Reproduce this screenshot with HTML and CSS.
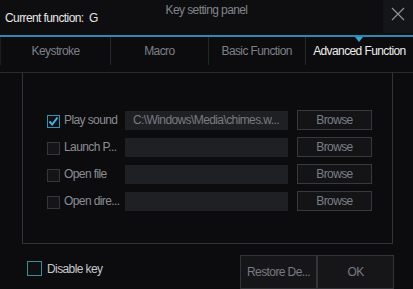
FILE: index.html
```html
<!DOCTYPE html>
<html lang="en">
<head>
    <meta charset="UTF-8">
    <meta name="viewport" content="width=device-width, initial-scale=1.0">
    <title>Key setting panel</title>
    <link rel="stylesheet" href="styles.css">
</head>
<body>
    <div class="window">
        <div class="titlebar">
            <div class="current">Current function:&nbsp; G</div>
            <div class="title">Key setting panel</div>
            <div class="close">
                <svg width="14" height="14" viewBox="0 0 14 14">
                    <path d="M1 1 L13 13 M13 1 L1 13" stroke="#8e9296" stroke-width="1.2" fill="none"/>
                </svg>
            </div>
        </div>

        <div class="tabs">
            <div class="tab tab-first">Keystroke</div>
            <div class="tab">Macro</div>
            <div class="tab">Basic Function</div>
            <div class="tab tab-last active">Advanced Function</div>
        </div>

        <div class="panel">
            <div class="row">
                <span class="check checked">
                    <svg width="11" height="11" viewBox="0 0 11 11">
                        <path d="M1.5 5.5 L4.2 8.5 L9.5 1.5" stroke="#4cb0e0" stroke-width="2" fill="none"/>
                    </svg>
                </span>
                <span class="label">Play sound</span>
                <div class="field">C:\Windows\Media\chimes.w...</div>
                <button class="browse">Browse</button>
            </div>
            <div class="row">
                <span class="check"></span>
                <span class="label">Launch P...</span>
                <div class="field"></div>
                <button class="browse">Browse</button>
            </div>
            <div class="row">
                <span class="check"></span>
                <span class="label">Open file</span>
                <div class="field"></div>
                <button class="browse">Browse</button>
            </div>
            <div class="row">
                <span class="check"></span>
                <span class="label">Open dire...</span>
                <div class="field"></div>
                <button class="browse">Browse</button>
            </div>
        </div>

        <div class="footer">
            <div class="disable">
                <span class="check teal"></span>
                <span class="disable-label">Disable key</span>
            </div>
            <div class="actions">
                <button class="action">Restore De...</button>
                <button class="action">OK</button>
            </div>
        </div>
    </div>
</body>
</html>
```

FILE: styles.css
```css
body {
    margin: 0;
    background-color: #0c0c0e;
    font-family: 'Liberation Sans', Arial, sans-serif;
    font-size: 12px;
    letter-spacing: -0.6px;
    color: #8a8d92;
}
.window {
    width: 413px;
    height: 289px;
    overflow: hidden;
}
.titlebar {
    display: grid;
    grid-template-columns: 1fr auto 1fr;
    height: 35px;
    border-bottom: 2px solid #2c8ab2;
    background-color: #0e0e10;
}
.current {
    align-self: center;
    padding-left: 5px;
    padding-top: 1px;
    color: #e6e6e6;
}
.title {
    padding-top: 3px;
    line-height: 15px;
    color: #80848a;
}
.close {
    justify-self: end;
    width: 30px;
    height: 33px;
    background-color: #141518;
    display: flex;
    justify-content: center;
    padding-top: 7px;
    box-sizing: border-box;
}
.tabs {
    display: flex;
    height: 35px;
    border-bottom: 1px solid #2a2b2f;
}
.tab {
    position: relative;
    width: 97px;
    height: 28px;
    line-height: 28px;
    text-align: center;
    border-left: 1px solid #26272b;
    color: #7c8087;
}
.tab-first {
    width: 110px;
    border-left: 1px solid #1c1d20;
}
.tab-last {
    width: 108px;
}
.tab.active {
    color: #ececec;
}
.tab.active::before {
    content: "";
    position: absolute;
    top: 0;
    left: 50%;
    margin-left: -4px;
    border-top: 5px solid #3aa2d2;
    border-left: 4px solid transparent;
    border-right: 4px solid transparent;
}
.panel {
    margin: 0 20px 0 22px;
    padding: 37px 0 32px 24px;
    border: 1px solid #323337;
    border-top: none;
    display: flex;
    flex-direction: column;
    gap: 7px;
}
.row {
    display: flex;
    align-items: center;
    height: 20px;
}
.check {
    box-sizing: border-box;
    width: 13px;
    height: 13px;
    border: 1px solid #36373b;
    background-color: #151518;
    display: flex;
    align-items: center;
    justify-content: center;
    margin-top: 2px;
}
.check.checked {
    border-color: #3a8fb0;
    background-color: #0f1114;
}
.label {
    width: 61px;
    margin-left: 4px;
    white-space: nowrap;
    overflow: hidden;
}
.field {
    box-sizing: border-box;
    width: 163px;
    height: 19px;
    line-height: 19px;
    padding-left: 8px;
    background-color: #1f2023;
    color: #777b81;
    white-space: nowrap;
    overflow: hidden;
}
.browse {
    box-sizing: border-box;
    width: 75px;
    height: 20px;
    margin-left: 9px;
    padding: 0;
    border: 1px solid #38393d;
    background-color: #141416;
    color: #7a7f87;
    font-family: inherit;
    font-size: 12px;
    letter-spacing: -0.6px;
}
.footer {
    display: flex;
    justify-content: space-between;
    padding: 11px 19px 0 27px;
}
.disable {
    display: flex;
    align-items: center;
    margin-top: 6px;
    height: 15px;
}
.check.teal {
    width: 15px;
    height: 15px;
    margin-top: 0;
    border-color: #3c8c9c;
    background-color: #0e0f12;
}
.disable-label {
    margin-left: 5px;
    color: #c6c8cc;
}
.actions {
    display: flex;
}
.action {
    box-sizing: border-box;
    width: 77px;
    height: 34px;
    padding: 0;
    border: 1px solid #333438;
    background-color: #161619;
    color: #777b82;
    font-family: inherit;
    font-size: 12px;
    letter-spacing: -0.6px;
}
```
